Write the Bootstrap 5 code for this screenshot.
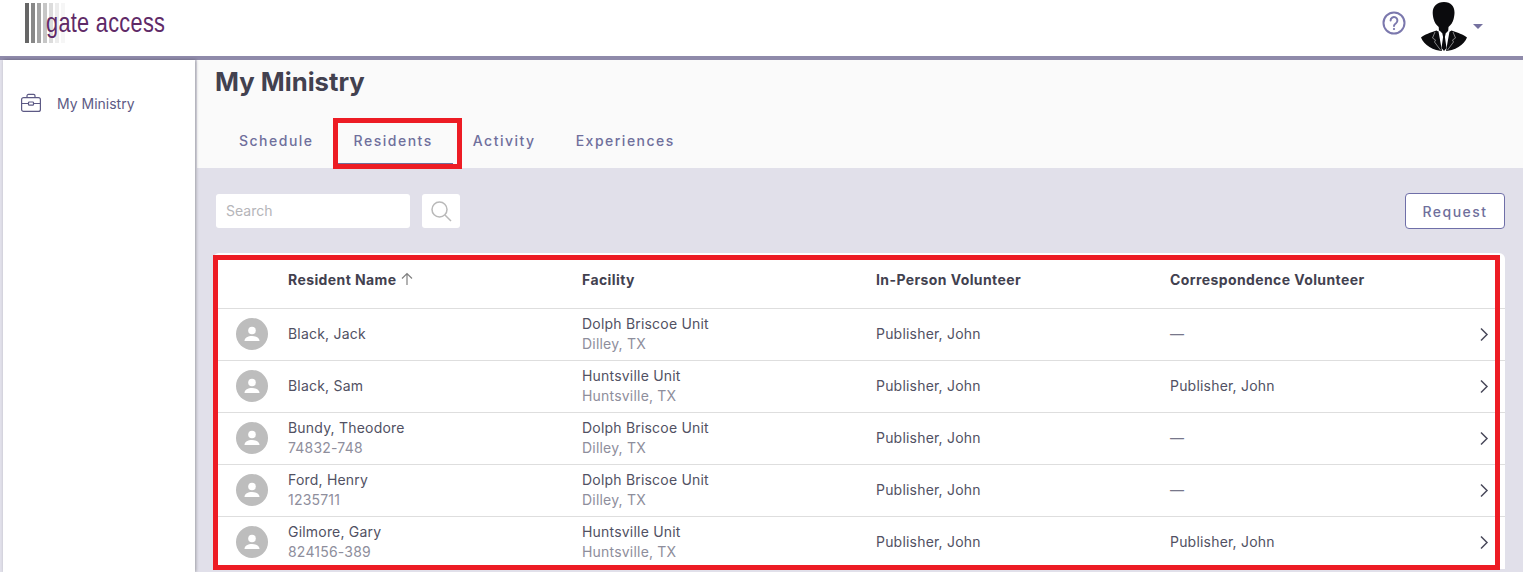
<!DOCTYPE html>
<html lang="en">
<head>
<meta charset="UTF-8">
<title>My Ministry</title>
<link href="https://cdn.jsdelivr.net/npm/bootstrap@5.3.0/dist/css/bootstrap.min.css" rel="stylesheet">
<style>
    html, body { height: 100%; overflow: hidden; }
    body { font-family: Inter, "Open Sans", sans-serif; font-size: 14px; letter-spacing: .2px; color: #515163; background: #e1e0ea; }
    .top-bar { height: 60px; background: #fff; border-bottom: 4px solid #8f8aaa; padding: 3px 0 0 25px; }
    .logo-box { position: relative; width: 145px; height: 41px; }
    .logo-bars { display: flex; gap: 2px; height: 40px; }
    .logo-bars i { display: block; width: 4px; }
    .logo-text { position: absolute; left: 21px; top: 2px; font-family: "Liberation Sans", sans-serif; font-size: 28px; line-height: 36px; color: #5f2a67; letter-spacing: .4px; transform: scaleX(.775); transform-origin: left; white-space: nowrap; }
    .top-right { margin-left: auto; padding-right: 40px; gap: 15px; height: 52px; margin-top: -3px; }
    .help-icon { margin-top: -6px; }
    .caret-down { width: 0; height: 0; border-left: 5px solid transparent; border-right: 5px solid transparent; border-top: 5px solid #75719f; margin-left: -9px; margin-top: 0; }
    .page-wrap { height: 512px; padding-left: 3px; }
    .side-col { width: 192px; background: #fff; box-shadow: 1px 0 3px rgba(0,0,0,.3); padding-top: 31px; flex: none; z-index: 1; }
    .side-link { padding-left: 18px; gap: 16px; color: #5d5a85; font-size: 14px; height: 24px; letter-spacing: 0; }
    .main-col { flex: 1; margin-left: 2px; min-width: 0; }
    .page-head { height: 108px; background: #fafafa; padding: 6px 18px 0 18px; }
    .page-head h1 { font-size: 25.7px; font-weight: 700; line-height: 32px; margin: 0; color: #42414f; letter-spacing: 0; }
    .tab-row { margin-top: 21px; margin-left: 4px; }
    .tab-row a { display: block; padding: 0 20px; height: 45px; line-height: 44px; color: #6f6f9c; font-size: 14px; font-weight: 500; letter-spacing: 1.5px; text-decoration: none; }
    .tab-row a.active { border-bottom: 1px solid #6f6f9c; }
    .main-body { padding: 25px 18px 0 19px; }
    .search-box { width: 194px; height: 34px; font-size: 14px; border: 0; border-radius: 3px; padding: 0 10px 2px; letter-spacing: 0; }
    .search-box::placeholder { color: #b5b5b9; }
    .search-btn { width: 38px; height: 34px; background: #fff; border-radius: 3px; margin-left: 12px; }
    .request-btn { width: 100px; height: 36px; margin-left: auto; padding: 0; background: #fff; color: #6f6f9c; border: 1px solid #6f6fa8; border-radius: 4px; font-size: 14px; font-weight: 500; letter-spacing: 1.5px; }
    .res-card { margin-top: 24px; margin-left: -3px; background: #fff; border-radius: 6px 6px 0 0; }
    .res-head, .res-line { display: grid; grid-template-columns: 75px 294px 294px 294px 1fr 26px; align-items: center; }
    .res-head { height: 56px; font-weight: 700; color: #42414f; border-bottom: 1px solid #dedede; padding-bottom: 3px; letter-spacing: .4px; }
    .res-line { height: 52px; border-bottom: 1px solid #dedede; line-height: 20px; padding-bottom: 1px; }
    .res-line:last-child { border-bottom: 0; padding-bottom: 2px; }
    .res-line svg { display: block; }
    .res-pic { width: 32px; height: 32px; border-radius: 50%; background: #bdbdbd; margin-left: 23px; display: flex; align-items: center; justify-content: center; }
    .sub-text { color: #8e8e9c; }
    .no-value { color: #77778a; }
    .red-box { position: absolute; border: 5px solid #ed1c24; pointer-events: none; z-index: 5; }
    .red-tab { left: 333px; top: 118px; width: 129px; height: 51px; }
    .red-table { left: 213px; top: 255px; width: 1287px; height: 315px; }
</style>
</head>
<body>
    <div class="top-bar d-flex">
        <div class="logo-box">
            <div class="logo-bars">
                <i style="background:#666"></i><i style="background:#888"></i><i style="background:#a4a4a4"></i><i style="background:#c6c6c6"></i><i style="background:#dcdcdc"></i><i style="background:#ececec"></i><i style="background:#f6f6f6"></i>
            </div>
            <div class="logo-text">gate access</div>
        </div>
        <div class="top-right d-flex align-items-center">
            <svg class="help-icon" width="24" height="24" viewBox="0 0 24 24" fill="none" stroke="#7b78ad" stroke-width="2"><circle cx="12" cy="12" r="10.5"/><path d="M8.6 9.5a3.4 3.4 0 1 1 5.4 2.7c-1.3.9-2 1.5-2 2.9" stroke-linecap="round"/><circle cx="12" cy="18" r=".7" fill="#7b78ad" stroke-width="1"/></svg>
            <svg width="46" height="50" viewBox="0 0 46 50">
                <path d="M23 1c7 0 10.500 4.500 10.500 10.500 0 2-.3 4-.9 6.500-.7 3-2.600 6-5.100 8l-.3 4 3 3H15l3-3-.3-4c-2.500-2-4.400-5-5.100-8-.6-2.500-.9-4.500-.9-6.500C11.700 5.500 16 1 23 1z" fill="#0b0b0d"/>
                <path d="M0 36.500c3-3 10-5 15.500-7L23 34l7.500-4.500c5.500 2 12.500 4 15.500 7C43 44 34 50 23 50S3 44 0 36.500z" fill="#0b0b0d"/>
                <path d="M18.500 29.500l4.500 4.500 4.500-4.500 1 1L25 50h-4l-3.500-19.500z" fill="#fff"/>
                <path d="M21.300 32.500h3.400l-.8 3.500 1.600 11-2.500 3-2.500-3 1.600-11z" fill="#0b0b0d"/>
                <path d="M14 31l-2.500 6 3 2-1 2 6 8M32 31l2.500 6-3 2 1 2-6 8" fill="none" stroke="#a0a0a0" stroke-width=".8"/>
            </svg>
            <span class="caret-down"></span>
        </div>
    </div>

    <div class="page-wrap d-flex">
        <div class="side-col">
            <div class="side-link d-flex align-items-center">
                <svg width="20" height="20" viewBox="0 0 20 20" fill="none" stroke="#5d5a85" stroke-width="1.200"><rect x=".6" y="4.600" width="18.800" height="13.800" rx="2"/><path d="M6 4.500V2.800C6 2 6.600 1.400 7.400 1.400h5.200c.8 0 1.400.6 1.400 1.400v1.700M.6 10.500h6.900M12.500 10.500h6.900"/><rect x="7.500" y="9" width="5" height="3.200" rx=".8"/></svg>
                <span>My Ministry</span>
            </div>
        </div>
        <div class="main-col">
            <div class="page-head">
                <h1>My Ministry</h1>
                <div class="tab-row d-flex">
                    <a href="#">Schedule</a>
                    <a href="#" class="active">Residents</a>
                    <a href="#">Activity</a>
                    <a href="#">Experiences</a>
                </div>
            </div>
            <div class="main-body">
                <div class="d-flex align-items-center">
                    <input class="search-box" type="text" placeholder="Search">
                    <div class="search-btn d-flex align-items-center justify-content-center">
                        <svg width="21" height="21" viewBox="0 0 21 21" fill="none" stroke="#b9b9b9" stroke-width="1.500"><circle cx="8.500" cy="8.500" r="7.500"/><path d="M14 14l6 6"/></svg>
                    </div>
                    <button class="request-btn" type="button">Request</button>
                </div>
                <div class="res-card">
                    <div class="res-head">
                        <div></div>
                        <div class="d-flex align-items-center gap-1">Resident Name
                            <svg width="14" height="14" viewBox="0 0 14 14" fill="none" stroke="#808080" stroke-width="1.200"><path d="M7 13V1.500M2 6.500l5-5 5 5"/></svg>
                        </div>
                        <div>Facility</div>
                        <div>In-Person Volunteer</div>
                        <div>Correspondence Volunteer</div>
                        <div></div>
                    </div>
                    <div id="res-rows"></div>
                </div>
            </div>
        </div>
    </div>

    <div class="red-box red-tab"></div>
    <div class="red-box red-table"></div>

    <script src="https://cdn.jsdelivr.net/npm/bootstrap@5.3.0/dist/js/bootstrap.bundle.min.js"></script>
    <script>
        const residents = [
            ['Black, Jack', '', 'Dolph Briscoe Unit', 'Dilley, TX', '—'],
            ['Black, Sam', '', 'Huntsville Unit', 'Huntsville, TX', 'Publisher, John'],
            ['Bundy, Theodore', '74832-748', 'Dolph Briscoe Unit', 'Dilley, TX', '—'],
            ['Ford, Henry', '1235711', 'Dolph Briscoe Unit', 'Dilley, TX', '—'],
            ['Gilmore, Gary', '824156-389', 'Huntsville Unit', 'Huntsville, TX', 'Publisher, John']
        ];
        const pic = '<svg width="18" height="18" viewBox="0 0 18 18" fill="#fff"><circle cx="9" cy="5.500" r="3.800"/><path d="M1.500 16c0-3.400 3.500-5 7.500-5s7.500 1.600 7.500 5z"/></svg>';
        const arrow = '<svg width="10" height="15" viewBox="0 0 10 15" fill="none" stroke="#4a4a5c" stroke-width="1.500"><path d="M2 1.500l6 6-6 6"/></svg>';
        document.getElementById('res-rows').innerHTML = residents.map(r => `
            <div class="res-line">
                <div><div class="res-pic">${pic}</div></div>
                <div><div>${r[0]}</div>${r[1] ? `<div class="sub-text">${r[1]}</div>` : ''}</div>
                <div><div>${r[2]}</div><div class="sub-text">${r[3]}</div></div>
                <div>Publisher, John</div>
                <div class="${r[4] === '—' ? 'no-value' : ''}">${r[4]}</div>
                <div>${arrow}</div>
            </div>`).join('');
    </script>
</body>
</html>
